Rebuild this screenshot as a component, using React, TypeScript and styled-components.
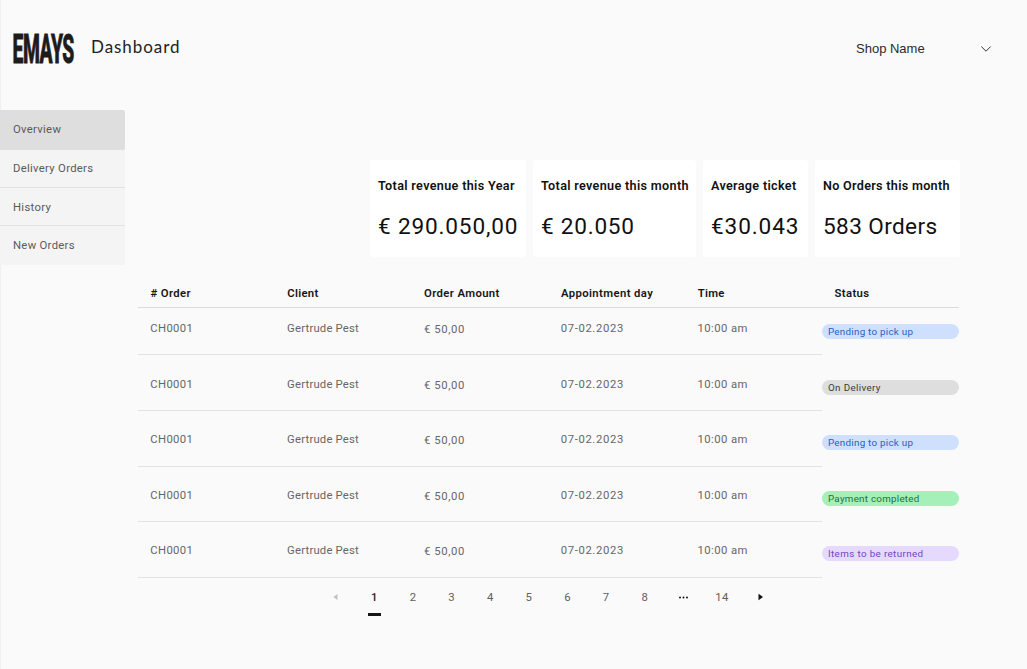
import React from "react";
import styled, { createGlobalStyle } from "styled-components";

const Global = createGlobalStyle`
  * { box-sizing: border-box; }
  html, body { margin: 0; background: #fafafa; }
  body { font-family: Roboto, "Liberation Sans", sans-serif; color: #161616; overflow: hidden; }
`;
const Page = styled.div`
  width: 1027px; height: 669px; background: #fafafa; border-left: 1px solid #f0f0f0;
  display: flex; flex-direction: column;
`;
const Header = styled.header`
  height: 110px; display: flex; align-items: flex-start; padding: 0 35px 0 12px;
`;
const Logo = styled.svg`
  width: 62px; height: 32px; margin-top: 33px; display: block; overflow: visible;
`;
const Title = styled.h1`
  margin: 36px 0 0 16px; font: 400 17px/22px Lato, sans-serif; letter-spacing: 0.95px; color: #222;
`;
const ShopPicker = styled.button`
  margin: 40px 0 0 auto; padding: 0; border: 0; background: none; width: 136px; height: 18px;
  display: flex; justify-content: space-between; align-items: center;
  font: 400 13px/18px "Liberation Sans", sans-serif; color: #2b2b2b;
`;
const Body = styled.div`
  display: flex; align-items: flex-start;
`;
const Nav = styled.nav`
  width: 125px; margin-left: -1px; display: flex; flex-direction: column;
`;
const NavItem = styled.a<{ $active?: boolean }>`
  height: ${(p) => (p.$active ? 39.5 : 38.4)}px; padding: 1px 0 0 13px; display: flex; align-items: center;
  font-size: 11.3px; letter-spacing: 0.3px; color: #5a5a5a;
  background: ${(p) => (p.$active ? "#dedede" : "#f4f4f4")};
  border-bottom: 1px solid ${(p) => (p.$active ? "#dedede" : "#e2e2e2")};
  border-radius: ${(p) => (p.$active ? "0 2px 2px 0" : "0")};
  &:last-child { border-bottom-color: #f4f4f4; }
`;
const Main = styled.main`
  width: 822px; margin-left: 13px; padding-top: 50px;
`;
const Cards = styled.section`
  display: flex; justify-content: flex-end; gap: 7px; height: 97px;
`;
const Card = styled.article<{ $w: number }>`
  width: ${(p) => p.$w}px; background: #fff; border-radius: 3px; padding: 18px 0 0 8px; white-space: nowrap;
`;
const CardLabel = styled.h2<{ $ls: number }>`
  margin: 0; font-size: 12.6px; line-height: 16px; font-weight: 600; color: #111; letter-spacing: ${(p) => p.$ls}px;
`;
const CardValue = styled.p<{ $ls: number }>`
  margin: 18px 0 0; font-size: 22.6px; line-height: 30px; color: #111; letter-spacing: ${(p) => p.$ls}px;
`;
const Table = styled.section`
  margin-top: 23px;
`;
const HeadRow = styled.div`
  display: grid; grid-template-columns: repeat(6, 136.8px); width: 821px; height: 28px;
  border-bottom: 1px solid #dcdcdc;
`;
const HeadCell = styled.div<{ $ls: number }>`
  padding-left: 12.5px; font-size: 11.3px; line-height: 28px; font-weight: 600; letter-spacing: ${(p) => p.$ls}px;
`;
const Row = styled.div<{ $first?: boolean }>`
  display: grid; grid-template-columns: repeat(6, 136.8px); height: ${(p) => (p.$first ? 47.4 : 55.6)}px;
  align-items: end;
`;
const Cell = styled.div<{ $ls: number; $drop?: boolean }>`
  height: 47.4px; padding: ${(p) => (p.$drop ? 14 : 13)}px 0 0 12.3px; border-bottom: 1px solid #e3e3e3;
  font-size: 11.3px; line-height: 16px; color: #666; letter-spacing: ${(p) => p.$ls}px;
`;
const StatusCell = styled.div`
  height: 47.4px; padding-top: 16px;
`;
const Tag = styled.div<{ $bg: string; $fg: string; $ls: number }>`
  width: 137px; height: 15px; border-radius: 8px; padding-left: 6px;
  background: ${(p) => p.$bg}; color: ${(p) => p.$fg};
  font-size: 9.8px; line-height: 15px; letter-spacing: ${(p) => p.$ls}px;
`;
const Pager = styled.nav`
  display: grid; grid-template-columns: repeat(12, 38.63px); margin-left: 178.5px; height: 40px;
`;
const PageItem = styled.a<{ $current?: boolean }>`
  display: flex; flex-direction: column; align-items: center; height: 39px; padding-top: 12px;
  font-size: 11.3px; line-height: 16px; letter-spacing: 0.4px;
  color: ${(p) => (p.$current ? "#222" : "#606060")}; font-weight: ${(p) => (p.$current ? 500 : 400)};
`;
const Marker = styled.span`
  width: 13px; height: 3px; margin-top: 7px; background: #161616;
`;
const Arrow = styled.svg`
  width: 5px; height: 8px; margin-top: 3.5px;
`;
const Dots = styled.svg`
  width: 9px; height: 3px; margin-top: 6px;
`;

const nav = ["Overview", "Delivery Orders", "History", "New Orders"];
const cards = [
  { label: "Total revenue this Year", value: "€ 290.050,00", w: 156, l: 0.34, v: 0.83 },
  { label: "Total revenue this month", value: "€ 20.050", w: 163, l: 0.33, v: 0.75 },
  { label: "Average ticket", value: "€30.043", w: 105, l: 0.33, v: 0.88 },
  { label: "No Orders this month", value: "583 Orders", w: 145, l: 0.3, v: 0.38 },
];
const heads: [string, number][] = [
  ["# Order", 0.38], ["Client", 0.3], ["Order Amount", 0.38], ["Appointment day", 0.4], ["Time", 0.3], ["Status", 0.38],
];
const blue = { bg: "#cfe0fe", fg: "#2460c4" };
const rows = [
  { text: "Pending to pick up", ls: 0.27, ...blue },
  { text: "On Delivery", ls: 0.36, bg: "#dedede", fg: "#3c3c3c" },
  { text: "Pending to pick up", ls: 0.27, ...blue },
  { text: "Payment completed", ls: 0.26, bg: "#a5efb8", fg: "#22733c" },
  { text: "Items to be returned", ls: 0.38, bg: "#e6d9fe", fg: "#7444be" },
];

export default function App() {
  return (
    <>
      <Global />
      <Page>
        <Header>
          <Logo viewBox="0 0 62 32" aria-label="EMAYS">
            <text x="-1" y="30.300" transform="scale(0.465 1)" fontFamily="Roboto, sans-serif" fontWeight="800" fontSize="41.500"
              fill="#1d1b1c" stroke="#1d1b1c" strokeWidth="0.900" letterSpacing="-0.900">EMAYS</text>
          </Logo>
          <Title>Dashboard</Title>
          <ShopPicker>
            Shop Name
            <svg width="12" height="8" viewBox="0 0 12 8" fill="none" stroke="#333" strokeWidth="1"><path d="M1.3 1.5 6 6.2l4.700-4.700" /></svg>
          </ShopPicker>
        </Header>
        <Body>
          <Nav>
            {nav.map((n, i) => <NavItem key={n} $active={i === 0}>{n}</NavItem>)}
          </Nav>
          <Main>
            <Cards>
              {cards.map((c) => (
                <Card key={c.label} $w={c.w}>
                  <CardLabel $ls={c.l}>{c.label}</CardLabel>
                  <CardValue $ls={c.v}>{c.value}</CardValue>
                </Card>
              ))}
            </Cards>
            <Table>
              <HeadRow>{heads.map(([t, ls]) => <HeadCell key={t} $ls={ls}>{t}</HeadCell>)}</HeadRow>
              {rows.map((r, i) => (
                <Row key={i} $first={i === 0}>
                  <Cell $ls={0.35}>CH0001</Cell>
                  <Cell $ls={0.2}>Gertrude Pest</Cell>
                  <Cell $ls={0.62} $drop>€ 50,00</Cell>
                  <Cell $ls={0.63}>07-02.2023</Cell>
                  <Cell $ls={0.43}>10:00 am</Cell>
                  <StatusCell><Tag $bg={r.bg} $fg={r.fg} $ls={r.ls}>{r.text}</Tag></StatusCell>
                </Row>
              ))}
            </Table>
            <Pager>
              <PageItem><Arrow viewBox="0 0 5 8"><path d="M4.500 1v6L.5 4z" fill="#c0c0c0" /></Arrow></PageItem>
              <PageItem $current>1<Marker /></PageItem>
              {[2, 3, 4, 5, 6, 7, 8].map((n) => <PageItem key={n}>{n}</PageItem>)}
              <PageItem>
                <Dots viewBox="0 0 9 3"><circle cx="1" cy="1.500" r=".9" /><circle cx="4.500" cy="1.500" r=".9" /><circle cx="8" cy="1.500" r=".9" /></Dots>
              </PageItem>
              <PageItem>14</PageItem>
              <PageItem><Arrow viewBox="0 0 5 8"><path d="M.5.7v6.600L5 4z" fill="#111" /></Arrow></PageItem>
            </Pager>
          </Main>
        </Body>
      </Page>
    </>
  );
}
